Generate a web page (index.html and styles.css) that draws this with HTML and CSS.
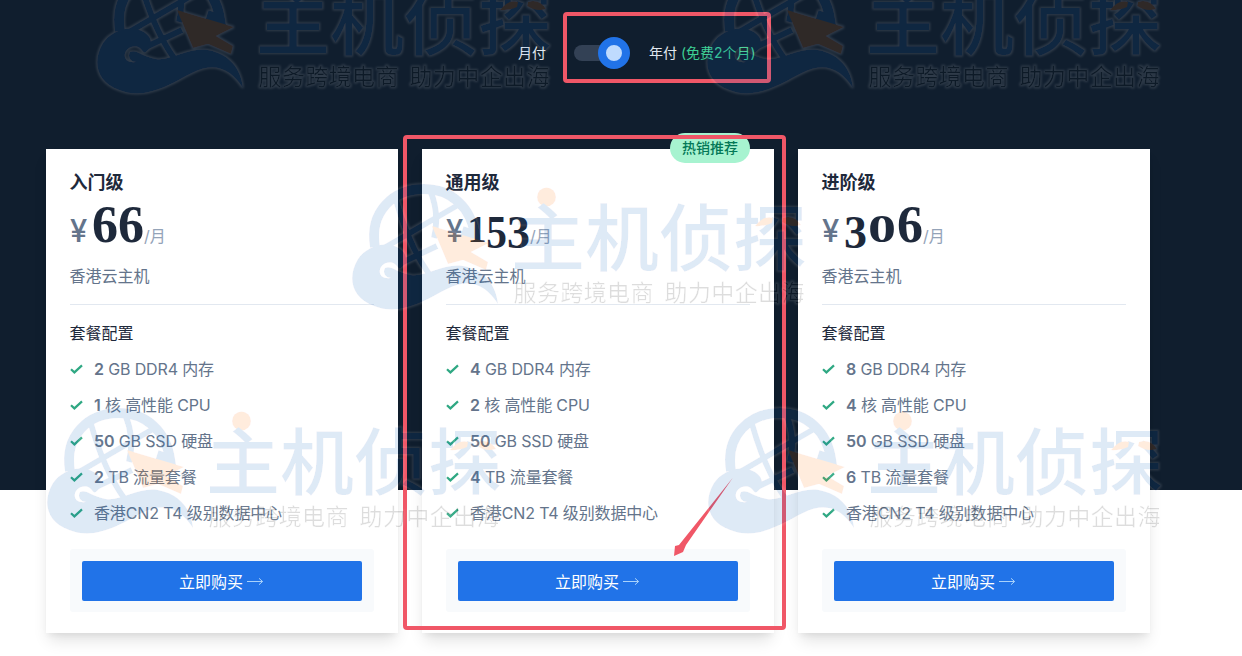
FILE: index.html
```html
<!DOCTYPE html>
<html lang="zh-CN">
<head>
<meta charset="utf-8">
<title>套餐价格</title>
<link rel="stylesheet" href="styles.css">
</head>
<body>
<main class="page">
  <div class="billing">
    <span class="billing-month">月付</span>
    <span class="switch"><span class="knob"></span></span>
    <span class="billing-year">年付 <em>(免费2个月)</em></span>
  </div>
  <section class="plans">
    <article class="card">
      <h2>入门级</h2>
      <div class="price"><span class="yen">¥</span><span class="amount"><b class="d6">6</b><b class="d6">6</b></span><span class="per">/月</span></div>
      <p class="desc">香港云主机</p>
      <h3>套餐配置</h3>
      <ul>
        <li><svg class="tick"><use href="#tick"/></svg><span><strong>2</strong> GB DDR4 内存</span></li>
        <li><svg class="tick"><use href="#tick"/></svg><span><strong>1</strong> 核 高性能 CPU</span></li>
        <li><svg class="tick"><use href="#tick"/></svg><span><strong>50</strong> GB SSD 硬盘</span></li>
        <li><svg class="tick"><use href="#tick"/></svg><span><strong>2</strong> TB 流量套餐</span></li>
        <li><svg class="tick"><use href="#tick"/></svg><span>香港CN2 T4 级别数据中心</span></li>
      </ul>
      <div class="action"><a class="buy">立即购买<svg class="arrow"><use href="#arrow"/></svg></a></div>
    </article>
    <article class="card">
      <span class="badge">热销推荐</span>
      <h2>通用级</h2>
      <div class="price"><span class="yen">¥</span><span class="amount"><b class="d1">1</b><b class="d5">5</b><b class="d3">3</b></span><span class="per">/月</span></div>
      <p class="desc">香港云主机</p>
      <h3>套餐配置</h3>
      <ul>
        <li><svg class="tick"><use href="#tick"/></svg><span><strong>4</strong> GB DDR4 内存</span></li>
        <li><svg class="tick"><use href="#tick"/></svg><span><strong>2</strong> 核 高性能 CPU</span></li>
        <li><svg class="tick"><use href="#tick"/></svg><span><strong>50</strong> GB SSD 硬盘</span></li>
        <li><svg class="tick"><use href="#tick"/></svg><span><strong>4</strong> TB 流量套餐</span></li>
        <li><svg class="tick"><use href="#tick"/></svg><span>香港CN2 T4 级别数据中心</span></li>
      </ul>
      <div class="action"><a class="buy">立即购买<svg class="arrow"><use href="#arrow"/></svg></a></div>
    </article>
    <article class="card">
      <h2>进阶级</h2>
      <div class="price"><span class="yen">¥</span><span class="amount"><b class="d3">3</b><b class="d0">0</b><b class="d6">6</b></span><span class="per">/月</span></div>
      <p class="desc">香港云主机</p>
      <h3>套餐配置</h3>
      <ul>
        <li><svg class="tick"><use href="#tick"/></svg><span><strong>8</strong> GB DDR4 内存</span></li>
        <li><svg class="tick"><use href="#tick"/></svg><span><strong>4</strong> 核 高性能 CPU</span></li>
        <li><svg class="tick"><use href="#tick"/></svg><span><strong>50</strong> GB SSD 硬盘</span></li>
        <li><svg class="tick"><use href="#tick"/></svg><span><strong>6</strong> TB 流量套餐</span></li>
        <li><svg class="tick"><use href="#tick"/></svg><span>香港CN2 T4 级别数据中心</span></li>
      </ul>
      <div class="action"><a class="buy">立即购买<svg class="arrow"><use href="#arrow"/></svg></a></div>
    </article>
  </section>
</main>

<svg class="overlay" width="1242" height="656" viewBox="0 0 1242 656">
  <defs>
    <symbol id="tick" viewBox="0 0 14 10"><path d="M1 5.2 L4.4 8.4 L12 1.4" fill="none" stroke="#2fa883" stroke-width="2.2"/></symbol>
    <symbol id="arrow" viewBox="0 0 17 9"><path d="M0 4.5H15.5M12 1.3L15.6 4.5L12 7.7" fill="none" stroke="#a9d2fb" stroke-width="1"/></symbol>
    <filter id="halo" filterUnits="userSpaceOnUse" x="-10" y="-10" width="480" height="150">
      <feMorphology in="SourceAlpha" operator="dilate" radius="1"/>
      <feGaussianBlur stdDeviation="1.3" result="edge"/>
      <feFlood flood-color="#fff"/>
      <feComposite in2="edge" operator="in" result="white"/>
      <feMerge><feMergeNode in="white"/><feMergeNode in="SourceGraphic"/></feMerge>
    </filter>
    <g id="mark" opacity=".13" filter="url(#halo)">
      <g fill="none" stroke="#1165c1">
        <path d="M24 67C18 32 42 9 73 9C101 9 120 28 124 55L111 51" stroke-width="10"/>
        <path d="M33 68Q64 50 107 25M45 20Q58 66 78 94M79 10Q89 34 83 58M50 83L86 66" stroke-width="6"/>
      </g>
      <path d="M52 86C57 81 56 73 48 68C34 60 15 67 7 79C-4 97 0 118 23 126C50 137 76 119 96 109C120 97 135 106 147 124C145 104 133 90 112 86C92 83 76 97 60 95C45 92 40 85 34 88C31 93 35 98 40 98C22 100 28 79 42 83C47 85 47 92 52 86Z" fill="#1165c1"/>
      <path d="M81 46L138 63L120 72L137 82L135 90L112 80L97 84Z" fill="#ff7501"/>
      <circle cx="195.500" cy="17" r="9.5" fill="#ff7501"/>
      <text class="brand" x="160" y="85" textLength="296" lengthAdjust="spacingAndGlyphs">主机侦探</text>
      <path d="M404 46Q413 35 422 38L421 43Q411 47 404 46ZM432 38Q443 34 450 45Q440 48 431 42Z" fill="#ff7501"/>
      <text class="tagline" x="162.500" y="121" textLength="140">服务跨境电商</text>
      <text class="tagline" x="313.500" y="121" textLength="140">助力中企出海</text>
    </g>
  </defs>
  <g fill="none" stroke="#f05767" stroke-width="4">
    <rect x="565" y="14" width="204" height="67" rx="2"/>
    <rect x="405" y="137" width="379" height="491" rx="2"/>
  </g>
  <path d="M733 477.500L686 545L683 552L674 556L675 546L679 545Z" fill="#f05767"/>
  <use href="#mark" x="96" y="-36"/>
  <use href="#mark" x="706" y="-36"/>
  <use href="#mark" x="351" y="180"/>
  <use href="#mark" x="46" y="404"/>
  <use href="#mark" x="707" y="404"/>
</svg>
</body>
</html>
```
FILE: styles.css
```css
* { box-sizing: border-box; }
body {
  margin: 0;
  width: 1242px;
  height: 656px;
  overflow: hidden;
  font-family: Inter, "Noto Sans CJK SC", sans-serif;
  font-size: 16px;
  color: #64748b;
}
.page {
  height: 656px;
  background: linear-gradient(#101e2e 490px, #fff 490px);
}
.billing {
  display: flex;
  align-items: center;
  height: 149px;
  padding: 0 0 43px 518px;
  font-size: 14px;
  line-height: 20px;
  color: #e2e8f0;
}
.billing-month { width: 56px; padding-bottom: 1px; }
.billing-year { margin-left: 27px; padding-bottom: 1px; white-space: nowrap; }
.billing-year em { font-style: normal; color: #3dcf94; }
.switch {
  display: flex;
  justify-content: flex-end;
  align-items: center;
  width: 48px;
  height: 16px;
  border-radius: 8px;
  background: #334155;
}
.knob {
  flex: none;
  width: 32px;
  height: 32px;
  margin-right: -8px;
  border: 8px solid #2173e8;
  border-radius: 50%;
  background: #bfdbfe;
}
.plans {
  display: grid;
  grid-template-columns: repeat(3, 352px);
  gap: 24px;
  padding-left: 46px;
}
.card {
  position: relative;
  height: 484px;
  padding: 20px 24px 0;
  background: #fff;
  box-shadow: 0 10px 15px -3px rgba(0, 0, 0, .12), 0 4px 6px -2px rgba(0, 0, 0, .06);
}
.badge {
  position: absolute;
  top: -16px;
  right: 24px;
  width: 80px;
  height: 30px;
  border-radius: 15px;
  background: #a7f3d0;
  color: #047857;
  font-size: 14px;
  font-weight: 500;
  line-height: 29px;
  text-align: center;
}
h2, h3, p, ul { margin: 0; padding: 0; }
h2 {
  height: 28px;
  font-size: 18px;
  font-weight: 700;
  line-height: 28px;
  text-indent: -0.5px;
  color: #1e293b;
}
.price {
  display: flex;
  align-items: baseline;
  height: 66px;
  line-height: 0;
}
/* zero-width strut that fixes the baseline for every digit size */
.price::before {
  content: "\200b";
  width: 0;
  font-family: "Liberation Serif", serif;
  font-size: 52px;
  line-height: 56px;
}
.yen { width: 22px; font-size: 31px; font-weight: 500; }
.amount {
  display: flex;
  align-items: baseline;
  color: #1e293b;
  font-family: "Liberation Serif", serif;
  font-size: 52px;
}
.amount b { display: flex; justify-content: center; }
.d6 { width: 26px; }
.d1 { width: 18px; font-size: 38px; }
.d5 { width: 21px; font-size: 46px; transform: translateY(6px) scaleX(.9); }
.d3 { width: 23px; font-size: 46px; transform: translateY(6px); }
.d0 { width: 30px; font-size: 40px; transform: scaleX(1.4); }
.per { color: #94a3b8; }
.desc {
  height: 42px;
  border-bottom: 1px solid #e2e8f0;
  line-height: 27px;
  text-indent: -0.5px;
}
h3 {
  height: 41px;
  padding-top: 16px;
  font-size: 16px;
  font-weight: 400;
  line-height: 24px;
  text-indent: -0.5px;
  color: #1e293b;
}
ul { padding-top: 5px; list-style: none; }
li {
  display: flex;
  align-items: center;
  height: 36px;
  line-height: 24px;
  letter-spacing: -0.14px;
  white-space: nowrap;
}
li span { padding-bottom: 1px; }
strong { font-weight: 600; }
.tick { width: 14px; height: 10px; margin-right: 10px; }
.action {
  height: 63px;
  margin-top: 18px;
  padding: 12px;
  border-radius: 3px;
  background: #f8fafc;
}
.buy {
  display: flex;
  align-items: center;
  justify-content: center;
  height: 40px;
  padding-right: 1px;
  border-radius: 2px;
  background: #2173e8;
  color: #fff;
}
.arrow { width: 17px; height: 9px; margin-left: 4px; }
.overlay { position: absolute; top: 0; left: 0; pointer-events: none; }
.brand {
  font: 500 73px "Noto Sans CJK SC", sans-serif;
  fill: #1165c1;
}
.tagline { font: 400 23px "Noto Sans CJK SC", sans-serif; fill: #000; }
```
